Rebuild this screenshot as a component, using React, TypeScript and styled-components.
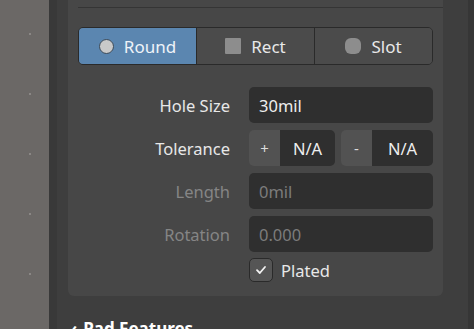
import styled, { createGlobalStyle } from 'styled-components';

const Global = createGlobalStyle`
  html, body {
    margin: 0;
    padding: 0;
    height: 100%;
    overflow: hidden;
    background: #3e3e3e;
  }
  #root {
    height: 100%;
  }
`;

const Screen = styled.div`
  display: flex;
  height: 329px;
  width: 474px;
  font-family: 'Noto Sans', 'Open Sans', sans-serif;
  font-size: 16.5px;
  color: #e8e8e8;
  overflow: hidden;
`;

const Canvas = styled.div`
  width: 49px;
  flex-shrink: 0;
  background-color: #6b6866;
  background-image: radial-gradient(circle, #8a8785 0.8px, transparent 1.2px);
  background-size: 60px 60px;
  background-position: 0px 4px;
`;

const Splitter = styled.div`
  width: 8px;
  flex-shrink: 0;
  background: #393939;
`;

const Panel = styled.div`
  flex: 1;
  display: flex;
  flex-direction: column;
  padding: 0 25px 0 11px;
  background: #3e3e3e;
`;

const Scrollbar = styled.div`
  width: 6px;
  flex-shrink: 0;
  background: #363636;
`;

const Card = styled.section`
  display: flex;
  flex-direction: column;
  background: #474747;
  border-radius: 0 0 6px 6px;
  padding: 7px 10px 14px 10px;
`;

const Separator = styled.div`
  height: 1px;
  background: #353535;
  margin-right: -10px;
`;

const Segmented = styled.div`
  display: flex;
  margin-top: 19px;
  height: 36px;
  border: 1px solid #2a2a2a;
  border-radius: 5px;
  overflow: hidden;
`;

const Segment = styled.div<{ $active?: boolean }>`
  flex: 1;
  display: flex;
  align-items: center;
  justify-content: center;
  gap: 10px;
  font-size: 17px;
  background: ${(p) => (p.$active ? '#5b86b0' : '#4b4b4b')};
  color: ${(p) => (p.$active ? '#eef3f8' : '#e8e8e8')};
  & + & {
    border-left: 1px solid #2a2a2a;
  }
`;

const ShapeIcon = styled.span<{ $shape: 'round' | 'rect' | 'slot' }>`
  width: ${(p) => (p.$shape === 'round' ? 15 : 16)}px;
  height: ${(p) => (p.$shape === 'round' ? 15 : 16)}px;
  box-sizing: border-box;
  background: ${(p) => (p.$shape === 'round' ? '#c9c9c9' : '#8d8d8d')};
  border: ${(p) => (p.$shape === 'round' ? '1.5px solid #3b4a59' : 'none')};
  border-radius: ${(p) =>
    p.$shape === 'round' ? '50%' : p.$shape === 'slot' ? '6px' : '1px'};
`;

const Form = styled.div`
  display: flex;
  flex-direction: column;
  gap: 7px;
  margin-top: 22px;
`;

const Row = styled.div`
  display: grid;
  grid-template-columns: 152px 1fr;
  column-gap: 19px;
  align-items: center;
`;

const Label = styled.span<{ $disabled?: boolean }>`
  text-align: right;
  color: ${(p) => (p.$disabled ? '#858585' : '#e8e8e8')};
`;

const Field = styled.div<{ $disabled?: boolean }>`
  height: 36px;
  display: flex;
  align-items: center;
  padding: 0 10px;
  background: #2f2f2f;
  border-radius: 5px;
  color: ${(p) => (p.$disabled ? '#7c7c7c' : '#eeeeee')};
`;

const Pair = styled.div`
  display: flex;
  gap: 6px;
`;

const Tol = styled.div<{ $grow: number }>`
  flex: ${(p) => p.$grow} 1 0;
  display: flex;
  height: 36px;
  border-radius: 5px;
  overflow: hidden;
`;

const Sign = styled.div`
  width: 31px;
  display: flex;
  align-items: center;
  justify-content: center;
  background: #525252;
  color: #dcdcdc;
  font-size: 15px;
`;

const TolValue = styled.div`
  flex: 1;
  display: flex;
  align-items: center;
  justify-content: center;
  background: #2f2f2f;
  color: #eeeeee;
`;

const Check = styled.label`
  display: flex;
  align-items: center;
  gap: 8px;
  height: 24px;
  margin-top: -1px;
`;

const Box = styled.span`
  width: 24px;
  height: 24px;
  box-sizing: border-box;
  border: 1px solid #2a2a2a;
  border-radius: 5px;
  background: #555555;
  display: flex;
  align-items: center;
  justify-content: center;
`;

const Heading = styled.h2`
  margin: 21px 0 0 3px;
  font-size: 17px;
  font-weight: 700;
  color: #ffffff;
  display: flex;
  align-items: center;
  gap: 6px;
`;

const App = () => {
  return (
    <>
      <Global />
      <Screen>
        <Canvas />
        <Splitter />
        <Panel>
          <Card>
            <Separator />
            <Segmented>
              <Segment $active>
                <ShapeIcon $shape="round" />
                Round
              </Segment>
              <Segment>
                <ShapeIcon $shape="rect" />
                Rect
              </Segment>
              <Segment>
                <ShapeIcon $shape="slot" />
                Slot
              </Segment>
            </Segmented>

            <Form>
              <Row>
                <Label>Hole Size</Label>
                <Field>30mil</Field>
              </Row>
              <Row>
                <Label>Tolerance</Label>
                <Pair>
                  <Tol $grow={86}>
                    <Sign>+</Sign>
                    <TolValue>N/A</TolValue>
                  </Tol>
                  <Tol $grow={92}>
                    <Sign>-</Sign>
                    <TolValue>N/A</TolValue>
                  </Tol>
                </Pair>
              </Row>
              <Row>
                <Label $disabled>Length</Label>
                <Field $disabled>0mil</Field>
              </Row>
              <Row>
                <Label $disabled>Rotation</Label>
                <Field $disabled>0.000</Field>
              </Row>
              <Row>
                <span />
                <Check>
                  <Box>
                    <svg width="14" height="14" viewBox="0 0 14 14">
                      <path
                        d="M3 7.2 L5.8 10 L11 4"
                        fill="none"
                        stroke="#f2f2f2"
                        strokeWidth="1.8"
                        strokeLinecap="round"
                        strokeLinejoin="round"
                      />
                    </svg>
                  </Box>
                  Plated
                </Check>
              </Row>
            </Form>
          </Card>
          <Heading>
            <span>‹</span>
            Pad Features
          </Heading>
        </Panel>
        <Scrollbar />
      </Screen>
    </>
  );
};

export default App;
